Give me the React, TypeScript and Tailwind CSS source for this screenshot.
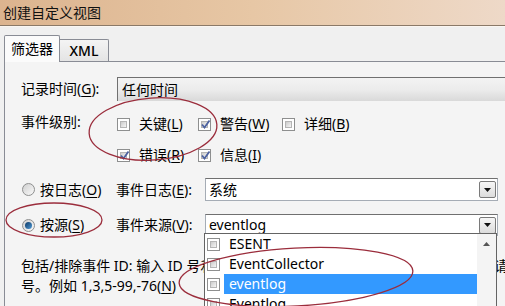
import React from 'react';

const FONT = { fontFamily: '"Noto Sans", "Noto Sans CJK SC", sans-serif' };

const Mn: React.FC<{ k: string }> = ({ k }) => (
  <span>
    (<span className="underline underline-offset-2">{k}</span>)
  </span>
);

const CheckBox: React.FC<{ checked?: boolean }> = ({ checked }) => (
  <span className="relative inline-flex w-[13px] h-[13px] shrink-0 border border-[#8e8f8f] bg-white p-[2px]">
    <span className="block w-full h-full bg-gradient-to-br from-[#cbcbcb] to-[#f6f6f6] border border-[#b5b5b5]" />
    {checked && (
      <svg className="absolute left-[1px] top-[0px]" width="11" height="11" viewBox="0 0 11 11">
        <path d="M2 5.5 L4.5 8.5 L9.5 1.5" fill="none" stroke="#4b61a0" strokeWidth="1.8" />
      </svg>
    )}
  </span>
);

const Radio: React.FC<{ on?: boolean }> = ({ on }) => (
  <span className="inline-flex items-center justify-center w-[13px] h-[13px] shrink-0 rounded-full border border-[#8e8f8f] bg-gradient-to-br from-[#d0d0d0] to-[#fafafa]">
    {on && <span className="block w-[7px] h-[7px] rounded-full bg-gradient-to-br from-[#0f3a66] to-[#4f9ad6]" />}
  </span>
);

const ArrowBtn: React.FC = () => (
  <span className="flex items-center justify-center w-[17px] h-[17px] mr-[1px] rounded-[2px] border border-[#7a7a7a] bg-gradient-to-b from-[#f6f6f6] to-[#dcdcdc]">
    <svg width="7" height="4" viewBox="0 0 7 4">
      <path d="M0 0 H7 L3.5 4 Z" fill="#111" />
    </svg>
  </span>
);

const Level: React.FC<{ label: string; k: string; checked?: boolean; w: string }> = ({ label, k, checked, w }) => (
  <div className={`flex items-center gap-[9px] ${w}`}>
    <CheckBox checked={checked} />
    <span>
      {label}
      <Mn k={k} />
    </span>
  </div>
);

const items = ['ESENT', 'EventCollector', 'eventlog', 'Eventlog'];

export default function App() {
  return (
    <div className="relative w-[505px] h-[306px] overflow-hidden bg-[#f0f0f0] text-[14px] text-black leading-none" style={FONT}>
      {/* title bar */}
      <div className="h-[26px] flex items-center pl-[3px] bg-gradient-to-r from-[#dcb48f] via-[#e7c7a5] to-[#eed9c8] border-b border-[#8a7968] text-[#111]">
        创建自定义视图
      </div>
      <div className="h-px bg-[#fbf6f1]" />

      {/* tabs */}
      <div className="flex items-end h-[34px] pl-[4px]">
        <div className="relative z-10 -mb-px h-[27px] w-[56px] flex items-center justify-center border border-b-0 border-[#898c95] rounded-t-[2px] bg-[#fbfbfb]">
          筛选器
        </div>
        <div className="h-[22px] w-[49px] flex items-center justify-center border border-l-0 border-b-0 border-[#898c95] rounded-tr-[2px] bg-gradient-to-b from-[#f4f4f4] to-[#e4e4e4] font-medium">
          XML
        </div>
      </div>

      {/* panel */}
      <div className="ml-[4px] h-[300px] border-l border-t border-[#898c95] bg-[#f4f4f4] pl-[16px]">
        <div className="mt-[15px] h-[24px] flex items-center">
          <span className="w-[96px]">
            记录时间<Mn k="G" />:
          </span>
          <div className="flex-1 h-full flex items-center pl-[4px] border-t border-l border-[#707070] bg-gradient-to-b from-[#f3f3f3] via-[#ececec] to-[#d9d9d9]">
            任何时间
          </div>
        </div>

        <div className="mt-[12px] h-[22px] flex items-center">
          <span className="w-[96px] -mt-[4px]">事件级别:</span>
          <Level label="关键" k="L" w="w-[81px]" />
          <Level label="警告" k="W" checked w="w-[84px]" />
          <Level label="详细" k="B" w="w-[80px]" />
        </div>

        <div className="mt-[9px] h-[22px] flex items-center">
          <span className="w-[96px]" />
          <Level label="错误" k="R" checked w="w-[81px]" />
          <Level label="信息" k="I" checked w="w-[84px]" />
        </div>

        <div className="mt-[12px] h-[23px] flex items-center">
          <div className="w-[95px] flex items-center gap-[5px] pl-[1px]">
            <Radio />
            <span>
              按日志<Mn k="O" />
            </span>
          </div>
          <span className="w-[89px]">
            事件日志<Mn k="E" />:
          </span>
          <div className="w-[293px] h-full flex items-center justify-between pl-[3px] border border-[#a5acb5] border-t-[#707070] bg-white">
            <span>系统</span>
            <ArrowBtn />
          </div>
        </div>

        <div className="mt-[13px] h-[22px] flex items-center">
          <div className="w-[95px] flex items-center gap-[5px] pl-[1px]">
            <Radio on />
            <span>
              按源<Mn k="S" />
            </span>
          </div>
          <span className="w-[89px]">
            事件来源<Mn k="V" />:
          </span>
          <div className="w-[293px] h-full flex items-center justify-between pl-[3px] border border-[#a5acb5] border-t-[#707070] bg-white">
            <span>eventlog</span>
            <ArrowBtn />
          </div>
        </div>

        <div className="mt-[20px] leading-[20px]">
          <div className="whitespace-nowrap">包括/排除事件 ID: 输入 ID 号和/或 ID 范围，使用逗号分隔。若要排除条件，请先键入减</div>
          <div className="whitespace-nowrap">
            号。例如 1,3,5-99,-76<Mn k="N" />
          </div>
        </div>
      </div>

      {/* open drop-down list */}
      <div className="absolute left-[204px] top-[233px] w-[293px] h-[90px] bg-white border border-[#646464] flex">
        <div className="flex-1 flex flex-col">
          {items.map((it) => (
            <div key={it} className="h-[20px] flex items-center pl-[2px]">
              <CheckBox />
              <span
                className={`ml-[4px] h-full flex-1 flex items-center pl-[5px] ${
                  it === 'eventlog' ? 'bg-[#3399ff] text-white' : ''
                }`}
              >
                {it}
              </span>
            </div>
          ))}
        </div>
        <div className="w-[19px] bg-[#f4f4f4] flex justify-center pt-[8px]">
          <svg width="7" height="4" viewBox="0 0 7 4">
            <path d="M3.5 0 L7 4 H0 Z" fill="#555" />
          </svg>
        </div>
      </div>

      {/* red annotation ellipses */}
      <svg className="absolute inset-0 pointer-events-none" width="505" height="306" viewBox="0 0 505 306">
        <ellipse cx="153" cy="129" rx="64" ry="31" transform="rotate(-4 153 129)" fill="none" stroke="#9b2d3c" strokeWidth="1.3" />
        <ellipse cx="54" cy="220" rx="48" ry="17" fill="none" stroke="#9b2d3c" strokeWidth="1.3" />
        <ellipse cx="296" cy="277" rx="117" ry="29" transform="rotate(-3 296 277)" fill="none" stroke="#9b2d3c" strokeWidth="1.3" />
      </svg>
    </div>
  );
}
